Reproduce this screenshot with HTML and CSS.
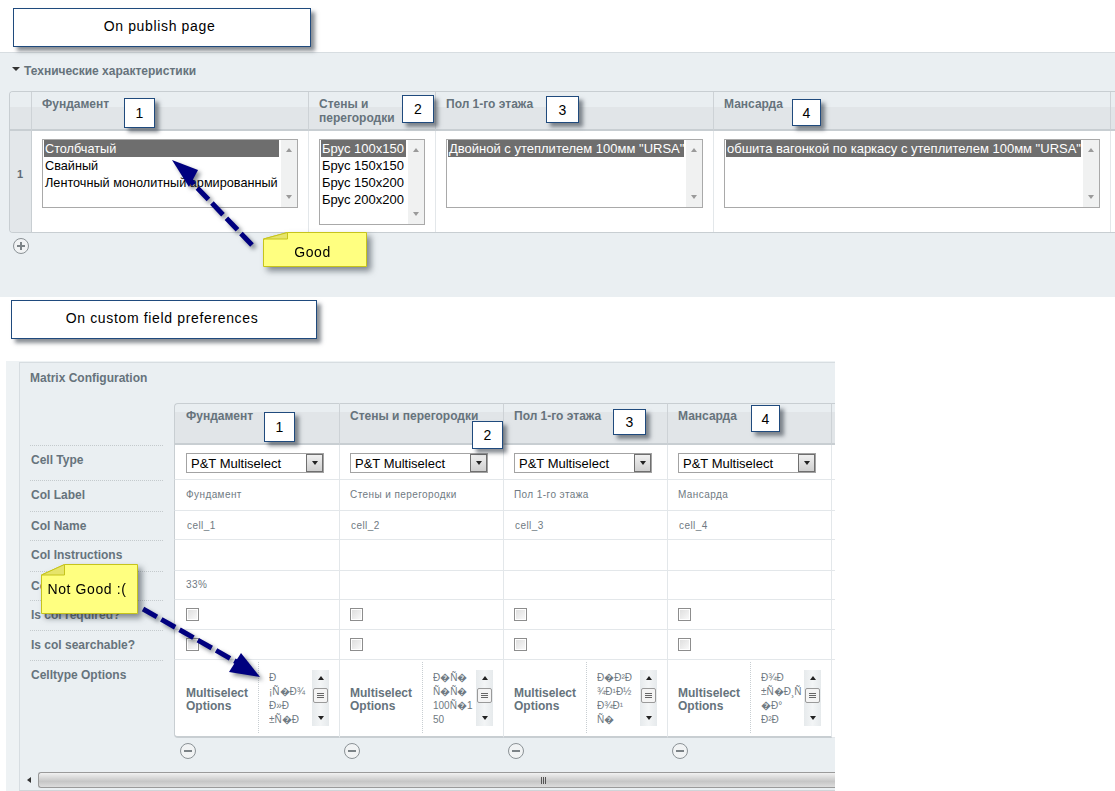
FILE: index.html
```html
<!DOCTYPE html>
<html lang="ru">
<head>
<meta charset="utf-8">
<title>Matrix multiselect</title>
<link rel="stylesheet" href="styles.css">
</head>
<body>
<div class="page">

  <section class="publish">
    <h2 class="pub-title"><span class="caret"></span>Технические характеристики</h2>
    <div class="pub-table">
      <div class="pub-head pub-num"></div>
      <div class="pub-head">Фундамент</div>
      <div class="pub-head">Стены и<br>перегородки</div>
      <div class="pub-head">Пол 1-го этажа</div>
      <div class="pub-head">Мансарда</div>
      <div class="pub-head pub-end"></div>

      <div class="pub-cell pub-rownum">1</div>
      <div class="pub-cell">
        <div class="listbox lb-short lb-narrow">
          <div class="lb-items">
            <div class="lb-item sel">Столбчатый</div>
            <div class="lb-item">Свайный</div>
            <div class="lb-item">Ленточный монолитный армированный</div>
          </div>
          <div class="lb-bar"><span class="tri up"></span><span class="tri down"></span></div>
        </div>
      </div>
      <div class="pub-cell">
        <div class="listbox lb-tall">
          <div class="lb-items">
            <div class="lb-item sel">Брус 100х150</div>
            <div class="lb-item">Брус 150х150</div>
            <div class="lb-item">Брус 150х200</div>
            <div class="lb-item">Брус 200х200</div>
          </div>
          <div class="lb-bar"><span class="tri up"></span><span class="tri down"></span></div>
        </div>
      </div>
      <div class="pub-cell">
        <div class="listbox lb-short">
          <div class="lb-items">
            <div class="lb-item sel">Двойной с утеплителем 100мм "URSA"</div>
          </div>
          <div class="lb-bar"><span class="tri up"></span><span class="tri down"></span></div>
        </div>
      </div>
      <div class="pub-cell">
        <div class="listbox lb-short">
          <div class="lb-items">
            <div class="lb-item sel">обшита вагонкой по каркасу с утеплителем 100мм "URSA"</div>
          </div>
          <div class="lb-bar"><span class="tri up"></span><span class="tri down"></span></div>
        </div>
      </div>
      <div class="pub-cell pub-end"></div>
    </div>
    <div class="round-btn add-btn"><span class="h"></span><span class="v"></span></div>
  </section>

  <section class="config">
    <h3 class="cfg-title">Matrix Configuration</h3>
    <div class="mx">
      <div class="mrow r-head">
        <div class="mlabel nolabel"></div>
        <div class="mcell mhead first">Фундамент</div>
        <div class="mcell mhead">Стены и перегородки</div>
        <div class="mcell mhead">Пол 1-го этажа</div>
        <div class="mcell mhead">Мансарда</div>
        <div class="mcell mhead"></div>
      </div>
      <div class="mrow r-type">
        <div class="mlabel">Cell Type</div>
        <div class="mcell first"><div class="dropdown"><span>P&amp;T Multiselect</span><i class="dd-btn"><span class="tri dark"></span></i></div></div>
        <div class="mcell"><div class="dropdown"><span>P&amp;T Multiselect</span><i class="dd-btn"><span class="tri dark"></span></i></div></div>
        <div class="mcell"><div class="dropdown"><span>P&amp;T Multiselect</span><i class="dd-btn"><span class="tri dark"></span></i></div></div>
        <div class="mcell"><div class="dropdown"><span>P&amp;T Multiselect</span><i class="dd-btn"><span class="tri dark"></span></i></div></div>
        <div class="mcell"></div>
      </div>
      <div class="mrow r-lab">
        <div class="mlabel">Col Label</div>
        <div class="mcell first small">Фундамент</div>
        <div class="mcell small">Стены и перегородки</div>
        <div class="mcell small">Пол 1-го этажа</div>
        <div class="mcell small">Мансарда</div>
        <div class="mcell"></div>
      </div>
      <div class="mrow r-name">
        <div class="mlabel">Col Name</div>
        <div class="mcell first small ind">cell_1</div>
        <div class="mcell small ind">cell_2</div>
        <div class="mcell small ind">cell_3</div>
        <div class="mcell small ind">cell_4</div>
        <div class="mcell"></div>
      </div>
      <div class="mrow r-ins">
        <div class="mlabel">Col Instructions</div>
        <div class="mcell first"></div><div class="mcell"></div><div class="mcell"></div><div class="mcell"></div><div class="mcell"></div>
      </div>
      <div class="mrow r-wid">
        <div class="mlabel">Col Width</div>
        <div class="mcell first small">33%</div><div class="mcell"></div><div class="mcell"></div><div class="mcell"></div><div class="mcell"></div>
      </div>
      <div class="mrow r-chk">
        <div class="mlabel">Is col required?</div>
        <div class="mcell first"><span class="check"></span></div>
        <div class="mcell"><span class="check"></span></div>
        <div class="mcell"><span class="check"></span></div>
        <div class="mcell"><span class="check"></span></div>
        <div class="mcell"></div>
      </div>
      <div class="mrow r-chk">
        <div class="mlabel">Is col searchable?</div>
        <div class="mcell first"><span class="check"></span></div>
        <div class="mcell"><span class="check"></span></div>
        <div class="mcell"><span class="check"></span></div>
        <div class="mcell"><span class="check"></span></div>
        <div class="mcell"></div>
      </div>
      <div class="mrow r-opt">
        <div class="mlabel">Celltype Options</div>
        <div class="mcell first opt">
          <div class="opt-name">Multiselect Options</div>
          <div class="opt-box"><div class="opt-text">Ð<br>¡Ñ�Ð¾<br>Ð»Ð<br>±Ñ�Ð</div><div class="mini-bar"><span class="tri dark up"></span><b class="grip"><s></s><s></s><s></s></b><span class="tri dark"></span></div></div>
        </div>
        <div class="mcell opt">
          <div class="opt-name">Multiselect Options</div>
          <div class="opt-box"><div class="opt-text">Ð�Ñ�<br>Ñ�Ñ�<br>100Ñ�1<br>50</div><div class="mini-bar"><span class="tri dark up"></span><b class="grip"><s></s><s></s><s></s></b><span class="tri dark"></span></div></div>
        </div>
        <div class="mcell opt">
          <div class="opt-name">Multiselect Options</div>
          <div class="opt-box"><div class="opt-text">Ð�Ð²Ð<br>¾Ð¹Ð½<br>Ð¾Ð¹<br>Ñ�</div><div class="mini-bar"><span class="tri dark up"></span><b class="grip"><s></s><s></s><s></s></b><span class="tri dark"></span></div></div>
        </div>
        <div class="mcell opt">
          <div class="opt-name">Multiselect Options</div>
          <div class="opt-box"><div class="opt-text">Ð¾Ð<br>±Ñ�Ð¸Ñ<br>�Ð°<br>Ð²Ð</div><div class="mini-bar"><span class="tri dark up"></span><b class="grip"><s></s><s></s><s></s></b><span class="tri dark"></span></div></div>
        </div>
        <div class="mcell"></div>
      </div>
      <div class="mrow r-del">
        <div class="mlabel nolabel"></div>
        <div class="del-cell"><div class="round-btn"><span class="h"></span></div></div>
        <div class="del-cell"><div class="round-btn"><span class="h"></span></div></div>
        <div class="del-cell"><div class="round-btn"><span class="h"></span></div></div>
        <div class="del-cell"><div class="round-btn"><span class="h"></span></div></div>
      </div>
    </div>
    <div class="hscroll">
      <div class="hs-left"><span class="tri left"></span></div>
      <div class="hs-thumb"><span class="hs-grip"><s></s><s></s><s></s></span></div>
    </div>
  </section>

  <div class="banner b-publish">On publish page</div>
  <div class="banner b-custom">On custom field preferences</div>

  <div class="num n1">1</div>
  <div class="num n2">2</div>
  <div class="num n3">3</div>
  <div class="num n4">4</div>
  <div class="num n5">1</div>
  <div class="num n6">2</div>
  <div class="num n7">3</div>
  <div class="num n8">4</div>

  <svg class="overlay" viewBox="0 0 1115 791" aria-hidden="true">
    <g class="arrow">
      <path class="arrow-line" d="M252 245 L186 176"/>
      <path class="arrow-head" d="M172 160 L198 170 L189 187 Z"/>
    </g>
    <g class="arrow">
      <path class="arrow-line" d="M143 609 L240 664"/>
      <path class="arrow-head" d="M260 677 L241 653 L229 672 Z"/>
    </g>
  </svg>

  <div class="note note-good">
    <svg class="note-shape" viewBox="0 0 104 35" preserveAspectRatio="none"><path class="note-fill" d="M.5 7 L24.5 .5 H103.5 V34.5 H.5 Z"/><path class="note-fold" d="M.5 7 L24.5 .5 V7 Z"/></svg>
    <span class="note-text">Good</span>
  </div>
  <div class="note note-bad">
    <svg class="note-shape" viewBox="0 0 97 50" preserveAspectRatio="none"><path class="note-fill" d="M.5 11 L23.5 .5 H96.5 V49.5 H.5 Z"/><path class="note-fold" d="M.5 11 L23.5 .5 V11 Z"/></svg>
    <span class="note-text">Not Good :(</span>
  </div>
</div>
</body>
</html>
```
FILE: styles.css
```css
* { box-sizing: border-box; }
html, body { margin: 0; padding: 0; background: #fff; }
body { font-family: "Liberation Sans", Arial, sans-serif; }
.page { position: relative; width: 1115px; height: 791px; overflow: hidden; padding-top: 52px; }

/* publish panel */
.publish { position: relative; height: 245px; background: #eaeff2; border-top: 1px solid #d7dde1; padding: 11px 0 0 9px; }
.pub-title { margin: 0; height: 15px; font-size: 12px; line-height: 15px; font-weight: bold; color: #66737c; padding-left: 15px; position: relative; }
.caret { position: absolute; left: 3px; top: 3px; border-style: solid; border-width: 4px 4.5px 0; border-color: #333 transparent transparent; }
.pub-table { margin-top: 12px; width: 1106px; display: grid; grid-template-columns: 22px 277px 127px 278px 397px 5px; grid-template-rows: 39px 101px; border-top: 1px solid #c8ced2; border-bottom: 1px solid #c8ced2; border-left: 1px solid #c8ced2; border-radius: 4px 0 0 4px; overflow: hidden; }
.pub-head { background: linear-gradient(#e9eef1 0 15px, #e1e5e8 15px); border-right: 1px solid #cdd2d6; border-bottom: 2px solid #c8ced2; font-size: 12px; line-height: 14px; font-weight: bold; color: #66737c; padding: 5px 0 0 10px; }
.pub-num { padding: 0; }
.pub-end { border-right: 0; }
.pub-cell { background: #fff; border-right: 1px solid #e3e7ea; padding: 8px 10px 0; }
.pub-rownum { background: #e3e7ea; border-right: 1px solid #c8ced2; font-size: 11px; font-weight: bold; color: #5f6b75; padding: 37px 0 0 7px; }
.listbox { display: flex; background: #fff; border: 1px solid #a9a9a9; }
.lb-short { height: 69px; }
.lb-tall { height: 86px; }
.lb-items { flex: 1; min-width: 0; padding: 0 1px; }
.lb-item { height: 17px; font-size: 13px; line-height: 18px; color: #000; padding-left: 1px; white-space: nowrap; overflow: hidden; }
.lb-narrow .lb-item { font-size: 12.7px; }
.lb-item.sel { background: #6e6e6e; color: #fff; }
.lb-bar { flex: none; width: 17px; background: #f0f1f1; border-left: 1px solid #fff; display: flex; flex-direction: column; justify-content: space-between; align-items: center; padding: 8px 0; }
.tri { display: block; width: 0; height: 0; border-style: solid; border-width: 4px 3.5px 0; border-color: #9a9a9a transparent transparent; }
.tri.up { border-width: 0 3.5px 4px; border-color: transparent transparent #9a9a9a; }
.tri.dark { border-color: #222 transparent transparent; }
.tri.dark.up { border-color: transparent transparent #222; }
.tri.left { border-width: 3.5px 4px 3.5px 0; border-color: transparent #333 transparent transparent; }
.round-btn { position: relative; width: 16px; height: 16px; border: 1px solid #8b9296; border-radius: 50%; background: #f1f3f4; }
.round-btn .h { position: absolute; left: 3px; right: 3px; top: 6px; height: 2px; background: #7c8387; }
.round-btn .v { position: absolute; top: 3px; bottom: 3px; left: 6px; width: 2px; background: #7c8387; }
.add-btn { margin: 5px 0 0 4px; }

/* configuration panel */
.config { position: relative; margin: 64px 280px 0 6px; height: 430px; padding-left: 13px; background: #eef2f4; }
.config::before { content: ""; position: absolute; z-index: 0; left: 13px; right: 0; top: 1px; bottom: 0; background: #eaeff2; border-top: 1px solid #d7dde1; border-left: 1px solid #d7dde1; border-bottom: 1px solid #cfd5d9; }
.cfg-title { position: relative; margin: 0; padding: 10px 0 0 11px; height: 42px; font-size: 12px; line-height: 14px; font-weight: bold; color: #66737c; }
.mx { position: relative; padding-left: 11px; width: 816px; overflow: hidden; }
.mrow { display: grid; grid-template-columns: 133px 11px 166px 164px 164px 164px 164px; grid-template-rows: minmax(0, 1fr); }
.mrow > .first { grid-column: 3; }
.mlabel { grid-column: 1; border-top: 1px dotted #c4cacd; font-size: 12px; line-height: 14px; font-weight: bold; color: #66737c; padding: 7px 0 0 1px; }
.nolabel { border-top: 0; }
.mcell { background: #fff; border-right: 1px solid #e3e7ea; border-bottom: 1px solid #e3e7ea; padding-left: 10px; }
.mcell.first { border-left: 1px solid #c8ced2; padding-left: 11px; }
.mhead { background: linear-gradient(#e9eef1 0 8px, #e1e5e8 8px); border-top: 1px solid #c8ced2; border-right: 1px solid #cdd2d6; border-bottom: 2px solid #c8ced2; font-size: 12px; line-height: 14px; font-weight: bold; color: #66737c; padding-top: 5px; }
.mhead.first { border-radius: 4px 0 0 0; }
.r-head { height: 42px; }
.r-type { height: 35px; }
.r-lab { height: 31px; }
.r-name { height: 29px; }
.r-ins { height: 31px; }
.r-wid { height: 29px; }
.r-chk { height: 30px; }
.r-opt { height: 78px; }
.r-del { height: 34px; }
.small { font-size: 10px; line-height: 30px; color: #6f7a82; letter-spacing: .42px; }
.mcell.ind { padding-left: 11px; padding-top: 2px; line-height: 26px; }
.mcell.first.ind { padding-left: 12px; }
.r-wid .small { line-height: 28px; }
.dropdown { display: flex; align-items: center; justify-content: space-between; width: 138px; height: 20px; margin-top: 8px; border: 1px solid #a3a3a3; background: #fff; font-size: 13px; color: #000; padding-left: 4px; }
.dd-btn { display: flex; align-items: center; justify-content: center; width: 17px; height: 18px; border: 1px solid #6f6f6f; background: linear-gradient(#f0f0f0, #cfcfcf); }
.check { display: block; width: 13px; height: 13px; margin-top: 8px; border: 1px solid #8d8d8d; background: linear-gradient(135deg, #dcdcdc, #fbfbfb); box-shadow: inset 0 0 0 1px #fff; }
.opt { display: flex; position: relative; border-bottom-color: #c8ced2; border-bottom-width: 2px; }
.r-opt .first { border-radius: 0 0 0 4px; }
.opt-name { width: 72px; flex: none; font-size: 12px; line-height: 13px; font-weight: bold; color: #66737c; padding-top: 27px; }
.opt-box { flex: 1; display: flex; border-left: 1px dotted #c8ced2; padding: 8px 0 0 10px; margin-bottom: 3px; margin-top: 2px; margin-right: 9px; }
.opt-text { width: 43px; flex: none; font-size: 10px; line-height: 14px; color: #6f7a82; white-space: nowrap; overflow: hidden; padding-top: 1px; }
.mini-bar { flex: none; width: 17px; height: 56px; background: linear-gradient(90deg, #e6eaec, #f3f5f6 50%, #e6eaec); display: flex; flex-direction: column; align-items: center; padding-top: 6px; }
.grip { display: flex; flex-direction: column; gap: 1px; align-items: center; justify-content: center; width: 15px; height: 15px; margin: 8px 0 13px; border: 1px solid #9a9a9a; border-radius: 2px; background: #f4f4f4; }
.grip s { display: block; width: 7px; height: 1px; background: #666; }
.del-cell { padding: 5px 0 0 4px; }
.r-del .del-cell:nth-child(2) { grid-column: 3; padding-left: 6px; }
.hscroll { position: relative; display: flex; margin: 0 0 0 1px; height: 16px; }
.hs-left { width: 18px; background: #eaeff2; display: flex; align-items: center; justify-content: center; }
.hs-thumb { flex: 1; display: flex; align-items: center; justify-content: flex-end; padding-right: 289px; border: 1px solid #9a9a9a; border-right: 0; border-radius: 3px 0 0 3px; background: linear-gradient(#f1f1f1, #c6c6c6 60%, #dcdcdc); }
.hs-grip { display: flex; gap: 1px; }
.hs-grip s { display: block; width: 1px; height: 7px; background: #555; }

/* annotations */
.banner, .num { position: absolute; background: #fff; border: 1px solid #1f4a7d; box-shadow: 4px 4px 4px rgba(40, 50, 60, .55); color: #000; }
.banner { font-size: 14px; line-height: 34px; letter-spacing: .65px; text-align: center; }
.b-publish { left: 13px; top: 8px; width: 298px; height: 39px; padding-right: 5px; }
.b-custom { left: 11px; top: 300px; width: 306px; height: 39px; padding-right: 4px; }
.num { display: flex; align-items: center; justify-content: center; font-size: 14px; }
.n1 { left: 124px; top: 98px; width: 31px; height: 30px; }
.n2 { left: 402px; top: 95px; width: 32px; height: 28px; }
.n3 { left: 546px; top: 96px; width: 33px; height: 27px; }
.n4 { left: 792px; top: 99px; width: 29px; height: 27px; }
.n5 { left: 264px; top: 412px; width: 31px; height: 30px; }
.n6 { left: 472px; top: 421px; width: 31px; height: 28px; }
.n7 { left: 613px; top: 409px; width: 33px; height: 26px; }
.n8 { left: 751px; top: 405px; width: 29px; height: 27px; }
.overlay { position: absolute; left: 0; top: 0; width: 1115px; height: 791px; pointer-events: none; }
.arrow { filter: drop-shadow(3px 3px 2px rgba(40, 50, 60, .55)); }
.arrow-line { fill: none; stroke: #00007f; stroke-width: 5; stroke-dasharray: 16 5; }
.arrow-head { fill: #00007f; }
.note { position: absolute; display: flex; align-items: center; justify-content: center; font-size: 14px; letter-spacing: .6px; color: #000; filter: drop-shadow(4px 4px 3px rgba(40, 50, 60, .55)); }
.note-shape { position: absolute; inset: 0; width: 100%; height: 100%; }
.note-fill { fill: #ffff80; stroke: #c6c41c; stroke-width: 1; }
.note-fold { fill: #e6e46a; stroke: #c6c41c; stroke-width: 1; }
.note-text { position: relative; }
.note-good { left: 263px; top: 232px; width: 104px; height: 35px; padding: 5px 5px 0 0; }
.note-bad { left: 41px; top: 564px; width: 97px; height: 50px; padding-right: 5px; }
```
